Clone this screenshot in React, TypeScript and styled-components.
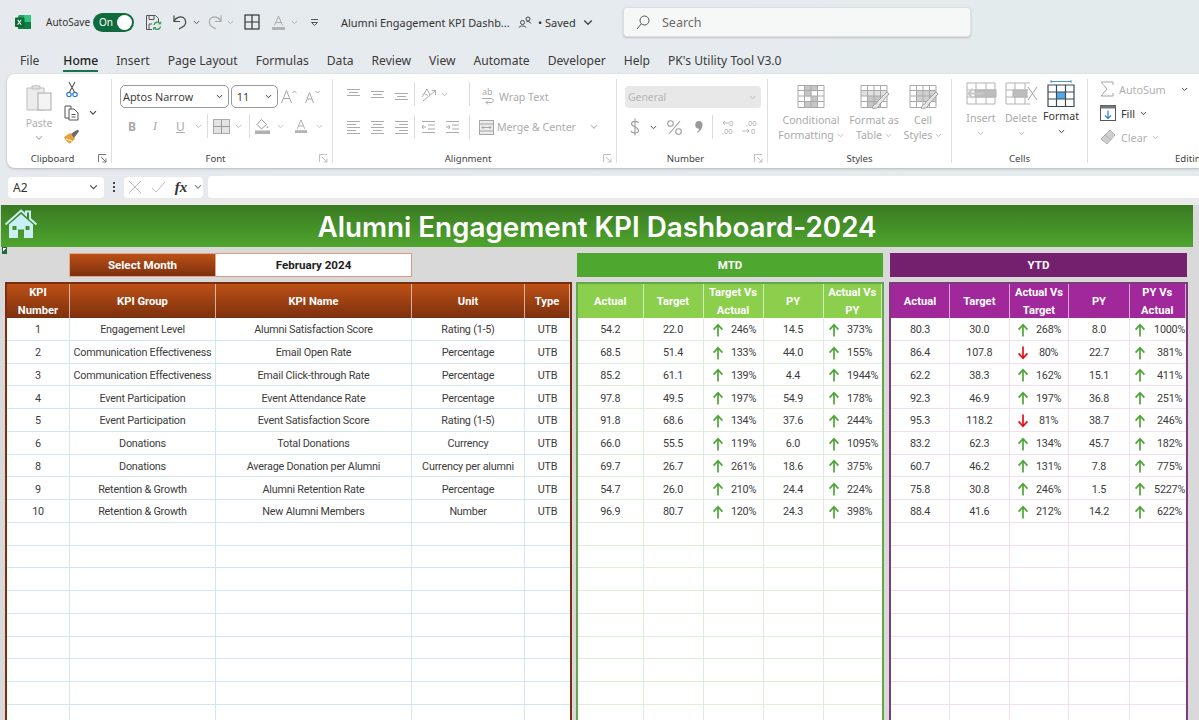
import React from "react";
import styled, { createGlobalStyle } from "styled-components";

const Global = createGlobalStyle`
  html, body { margin: 0; padding: 0; overflow: hidden; }
  body { font-family: "Noto Sans", "Open Sans", sans-serif; }
  svg { display: block; flex: none; }
`;

const Page = styled.div`
  position: relative;
  width: 1199px;
  height: 720px;
  overflow: hidden;
  background: linear-gradient(90deg, #e6eaee 0%, #e5ebee 60%, #e3ebec 100%);
`;

/* ---------- title bar ---------- */
const TitleBar = styled.header`
  height: 44px;
  display: flex;
  align-items: center;
  padding-left: 15px;
  color: #333;
`;
const Tool = styled.span<{ $w: number; $ml?: number }>`
  flex: none;
  width: ${(p) => p.$w}px;
  margin-left: ${(p) => p.$ml ?? 0}px;
  display: flex;
  align-items: center;
  justify-content: center;
`;
const AutoSaveLabel = styled.span`
  margin-left: 15px;
  font-size: 10px;
  width: 47px;
  flex: none;
  white-space: nowrap;
`;
const Toggle = styled.span`
  flex: none;
  width: 41px;
  height: 19px;
  border-radius: 10px;
  background: #0f6b3d;
  color: #fff;
  font-size: 10px;
  display: flex;
  align-items: center;
  justify-content: space-between;
  padding: 0 2px 0 6px;
  box-sizing: border-box;
`;
const Knob = styled.span`
  width: 15px;
  height: 15px;
  border-radius: 50%;
  background: #fff;
`;
const DocTitle = styled.span`
  flex: none;
  width: 168px;
  margin-left: 22px;
  font-size: 10.9px;
  white-space: nowrap;
`;
const Saved = styled.span`
  flex: none;
  margin-left: 6px;
  width: 44px;
  font-size: 11px;
  white-space: nowrap;
`;
const SearchBox = styled.div`
  flex: none;
  margin-left: 30px;
  width: 348px;
  height: 30px;
  box-sizing: border-box;
  background: #f6f7f7;
  border: 1px solid #dde0e1;
  border-radius: 4px;
  box-shadow: 0 1px 2px rgba(0, 0, 0, 0.18);
  display: flex;
  align-items: center;
  gap: 12px;
  padding-left: 12px;
  font-size: 12.5px;
  color: #6b6b6b;
`;

/* ---------- tabs ---------- */
const Tabs = styled.nav`
  height: 30px;
  display: flex;
  gap: 18px;
  padding-left: 20px;
  font-size: 12.1px;
  color: #3a3a3a;
`;
const Tab = styled.span<{ $active?: boolean }>`
  position: relative;
  height: 28px;
  line-height: 33px;
  white-space: nowrap;
  font-weight: ${(p) => (p.$active ? 500 : 400)};
  color: ${(p) => (p.$active ? "#222" : "#3a3a3a")};
  &:first-child {
    margin-right: 6px;
  }
  ${(p) =>
    p.$active
      ? `&::after { content: ""; position: absolute; left: 0; right: 0; bottom: 0; height: 2px; background: #17734a; }`
      : ""}
`;

/* ---------- ribbon ---------- */
const Ribbon = styled.section`
  margin-left: 7px;
  height: 94px;
  background: #fff;
  border-radius: 8px 0 0 8px;
  box-shadow: 0 1px 3px rgba(0, 0, 0, 0.22);
  display: flex;
  overflow: hidden;
`;
const Group = styled.div<{ $w: number; $end?: boolean }>`
  flex: none;
  width: ${(p) => p.$w}px;
  height: 84px;
  margin-top: 5px;
  box-sizing: border-box;
  border-right: ${(p) => (p.$end ? "none" : "1px solid #dedede")};
  display: flex;
  flex-direction: column;
`;
const GroupBody = styled.div<{ $pl?: number }>`
  flex: 1;
  min-height: 0;
  padding-left: ${(p) => p.$pl ?? 0}px;
  display: flex;
`;
const BodyColumn = styled.div<{ $pl?: number }>`
  flex: 1;
  min-height: 0;
  padding-left: ${(p) => p.$pl ?? 0}px;
  display: flex;
  flex-direction: column;
`;
const GroupFoot = styled.div<{ $pl?: number }>`
  height: 14px;
  margin-bottom: -2px;
  padding-left: ${(p) => p.$pl ?? 0}px;
  display: flex;
  align-items: center;
  font-size: 9.6px;
  color: #444;
`;
const GroupName = styled.span`
  flex: 1;
  text-align: center;
`;
const FootLeft = styled.span`
  white-space: nowrap;
`;
const Launcher = styled.span`
  flex: none;
  width: 13px;
  display: flex;
  justify-content: flex-start;
`;
const PasteColumn = styled.div`
  flex: none;
  width: 44px;
  margin-left: 10px;
  padding-top: 4px;
  display: flex;
  flex-direction: column;
  align-items: center;
  font-size: 10.4px;
  color: #aeaeae;
`;
const PasteLabel = styled.span`
  margin-top: 5px;
  line-height: 14px;
`;
const ChevRow = styled.span`
  margin-top: 5px;
`;
const ClipStack = styled.div`
  flex: none;
  margin-top: -1px;
  display: grid;
  grid-template-columns: 21px 22px;
  grid-auto-rows: 23.5px;
  justify-items: center;
  align-items: center;
`;
const RowGrid = styled.div<{ $cols: string; $h: number; $mt?: number }>`
  flex: none;
  height: ${(p) => p.$h}px;
  margin-top: ${(p) => p.$mt ?? 0}px;
  display: grid;
  grid-template-columns: ${(p) => p.$cols};
  align-items: center;
  justify-items: center;
  color: #aaa;
  white-space: nowrap;
`;
const Sep = styled.span`
  width: 1px;
  height: 24px;
  background: #dcdcdc;
`;
const Select = styled.span<{ $w: number }>`
  box-sizing: border-box;
  width: ${(p) => p.$w}px;
  height: 23px;
  display: flex;
  align-items: center;
  justify-content: space-between;
  padding: 0 5px 0 2px;
  border: 1px solid #9a9a9a;
  border-radius: 5px;
  color: #333;
  font-size: 10.9px;
  font-family: "Open Sans", sans-serif;
`;
const GreySelect = styled.span`
  box-sizing: border-box;
  width: 136px;
  height: 22px;
  display: flex;
  align-items: center;
  justify-content: space-between;
  padding: 0 5px 0 3px;
  background: #e8e8e8;
  border-radius: 4px;
  color: #b5b5b5;
  font-size: 10.4px;
`;
const IconLabel = styled.span<{ $down?: number }>`
  justify-self: start;
  display: flex;
  align-items: center;
  gap: 3px;
  font-size: 10.6px;
  color: #ababab;
  padding-top: ${(p) => p.$down ?? 0}px;
`;
const BigButtons = styled.div`
  display: flex;
`;
const BigButton = styled.div<{ $w: number; $pt?: number; $dark?: boolean }>`
  flex: none;
  width: ${(p) => p.$w}px;
  padding-top: ${(p) => p.$pt ?? 6}px;
  display: flex;
  flex-direction: column;
  align-items: center;
  font-size: 10.6px;
  line-height: 15px;
  color: ${(p) => (p.$dark ? "#333" : "#aaa")};
  white-space: nowrap;
`;
const BigText = styled.span<{ $mt?: number }>`
  margin-top: ${(p) => p.$mt ?? 4}px;
  text-align: center;
  display: flex;
  flex-direction: column;
  align-items: center;
`;
const InlineChev = styled.span`
  display: inline-flex;
  align-items: center;
  gap: 3px;
`;
const EditRow = styled.div<{ $dark?: boolean }>`
  height: 24px;
  display: flex;
  align-items: center;
  gap: 5px;
  font-size: 10.8px;
  color: ${(p) => (p.$dark ? "#333" : "#b0b0b0")};
  white-space: nowrap;
`;
const EditStack = styled.div`
  margin-top: -2px;
  padding-left: 12px;
`;
const EditSpacer = styled.span`
  width: 5px;
`;

/* ---------- formula bar ---------- */
const FormulaBar = styled.div`
  height: 22px;
  margin-top: 8px;
  display: flex;
  align-items: center;
  padding-left: 8px;
`;
const NameBox = styled.div`
  flex: none;
  width: 96px;
  height: 21px;
  box-sizing: border-box;
  background: #fff;
  border-radius: 4px;
  display: flex;
  align-items: center;
  justify-content: space-between;
  padding: 0 6px 0 5px;
  font-size: 12px;
  color: #333;
`;
const Dots = styled.span`
  flex: none;
  width: 20px;
  display: flex;
  flex-direction: column;
  align-items: center;
  gap: 2px;
`;
const Dot = styled.i`
  width: 2px;
  height: 2px;
  background: #444;
`;
const FxBox = styled.div`
  flex: none;
  width: 79px;
  height: 21px;
  background: #fff;
  border-radius: 4px;
  display: grid;
  grid-template-columns: 22px 24px 22px 11px;
  justify-items: center;
  align-items: center;
`;
const FxText = styled.span`
  font-family: "Liberation Serif", serif;
  font-style: italic;
  font-weight: 700;
  font-size: 15px;
  color: #333;
`;
const FormulaInput = styled.div`
  flex: 1;
  height: 22px;
  margin-left: 5px;
  background: #fff;
  border-radius: 4px 0 0 4px;
  border-bottom: 1px solid #e2e2e2;
`;

/* ---------- sheet ---------- */
const Sheet = styled.main`
  position: relative;
  height: 522px;
  padding-top: 7px;
  box-sizing: border-box;
  background: linear-gradient(#e9e9e9 0 7px, #d9d9d9 7px);
  font-family: Roboto, "Liberation Sans", sans-serif;
`;
const Banner = styled.div`
  position: relative;
  width: 1192px;
  height: 42px;
  margin-left: 1px;
  background: linear-gradient(#3a7a22, #4fa52e);
  color: #fff;
  font-family: Inter, "Liberation Sans", sans-serif;
  font-weight: 600;
  font-size: 27.8px;
  display: flex;
  align-items: center;
  justify-content: center;
  padding-top: 1px;
  box-sizing: border-box;
`;
const HomeMark = styled.span`
  position: absolute;
  left: 3px;
  top: 4px;
`;
const CellMark = styled.span`
  position: absolute;
  left: 2px;
  top: 49px;
  width: 5px;
  height: 7px;
  background: linear-gradient(135deg, #fff 0 50%, #1f6b3d 50%);
  border: 1px solid #1f6b3d;
  box-sizing: border-box;
`;
const Sections = styled.div`
  display: flex;
  margin-top: 6px;
  padding-left: 5px;
`;
const Section = styled.section<{ $w: number; $ml?: number }>`
  flex: none;
  width: ${(p) => p.$w}px;
  margin-left: ${(p) => p.$ml ?? 0}px;
`;
const MonthBar = styled.div`
  height: 24px;
  margin-left: 64px;
  width: 343px;
  display: flex;
  font-weight: 700;
  font-size: 11.6px;
`;
const MonthLabel = styled.div`
  width: 147px;
  display: flex;
  align-items: center;
  justify-content: center;
  color: #fff;
  background: linear-gradient(#bd5016, #7c300e);
  border: 1px solid #e0a98d;
  box-sizing: border-box;
`;
const MonthValue = styled.div`
  flex: 1;
  display: flex;
  align-items: center;
  justify-content: center;
  background: #fff;
  color: #222;
  border: 1px solid #dc9a78;
  border-left: none;
  box-sizing: border-box;
`;
const BandTitle = styled.div<{ $bg: string; $mx: number; $mr: number }>`
  height: 24px;
  margin: 0 ${(p) => p.$mr}px 0 ${(p) => p.$mx}px;
  display: flex;
  align-items: center;
  justify-content: center;
  color: #fff;
  font-weight: 700;
  font-size: 11.5px;
  background: ${(p) => p.$bg};
`;
const Table = styled.div<{ $cols: string; $edge: string }>`
  margin-top: 5px;
  display: grid;
  grid-template-columns: ${(p) => p.$cols};
  grid-template-rows: 34px;
  grid-auto-rows: 22.75px;
  box-sizing: border-box;
  border: 2px solid ${(p) => p.$edge};
  border-bottom: none;
  background: #fff;
`;
const Head = styled.div<{ $bg: string }>`
  background: ${(p) => p.$bg};
  color: #fff;
  font-weight: 700;
  font-size: 11.2px;
  line-height: 18px;
  padding-top: 1px;
  display: flex;
  align-items: center;
  justify-content: center;
  text-align: center;
  white-space: pre-line;
  box-sizing: border-box;
  border-right: 1px solid rgba(255, 255, 255, 0.6);
  &:last-of-type {
    border-right: none;
  }
`;
const Cell = styled.div<{ $line: string; $last?: boolean }>`
  box-sizing: border-box;
  border-bottom: 1px solid ${(p) => p.$line};
  border-right: ${(p) => (p.$last ? "none" : `1px solid ${p.$line}`)};
  padding-top: 2px;
  display: flex;
  align-items: center;
  justify-content: center;
  font-size: 10.8px;
  letter-spacing: -0.22px;
  color: #3c3c3c;
  white-space: nowrap;
  overflow: hidden;
`;
const DeltaCell = styled(Cell)<{ $pad: number }>`
  justify-content: flex-start;
  padding-left: ${(p) => p.$pad}px;
`;
const DeltaText = styled.span<{ $ml: number; $left?: boolean }>`
  margin-left: ${(p) => p.$ml}px;
  width: 40px;
  flex: none;
  text-align: ${(p) => (p.$left ? "left" : "center")};
`;

/* ---------- drawings ---------- */
const Chev = ({ c = "#9a9a9a", w = 8 }: { c?: string; w?: number }) => (
  <svg width={w} height={w * 0.7} viewBox="0 0 8 5.6" fill="none" stroke={c} strokeWidth="1.1">
    <path d="M1 1.2l3 3 3-3" />
  </svg>
);
const ExcelLogo = () => (
  <svg width="16" height="16" viewBox="0 0 16 16">
    <rect x="3" y="1" width="13" height="14" rx="1.5" fill="#21a366" />
    <rect x="9" y="1" width="7" height="7" fill="#33c481" />
    <rect x="3" y="8" width="13" height="7" fill="#107c41" />
    <rect x="0" y="3.5" width="9.5" height="9.5" rx="1" fill="#0b6a38" />
    <path d="M2.6 5.7l3.6 5M6.2 5.7l-3.6 5" stroke="#fff" strokeWidth="1.1" />
  </svg>
);
const SaveSync = () => (
  <svg width="17" height="17" viewBox="0 0 17 17" fill="none">
    <path d="M1.5 1.5h9l3 3v4M7 15.5H1.5z" stroke="#555" strokeWidth="1" />
    <path d="M1.5 1.5v14M4 1.5v4h5v-4M4 15v-5h3" stroke="#555" strokeWidth="1" />
    <path d="M9 11a3.4 3.4 0 0 1 6-1.6M15.5 12.5a3.4 3.4 0 0 1-6 1.6" stroke="#2f9a56" strokeWidth="1.4" />
    <path d="M15.7 7.5v2.4h-2.4M8.6 16v-2.4H11" stroke="#2f9a56" strokeWidth="1" />
  </svg>
);
const Undo = ({ c, flip }: { c: string; flip?: boolean }) => (
  <svg width="16" height="16" viewBox="0 0 16 16" fill="none" stroke={c} strokeWidth="1.2" style={flip ? { transform: "scaleX(-1)" } : undefined}>
    <path d="M2 1.5v6h6" />
    <path d="M2 7.2C4 3.6 8 1.8 11.2 3.6c3.2 2 3.2 6.2.8 8.4L7 15" />
  </svg>
);
const BorderGrid = () => (
  <svg width="16" height="16" viewBox="0 0 16 16" fill="none" stroke="#333" strokeWidth="1.2">
    <rect x="1" y="1" width="14" height="14" />
    <path d="M8 1v14M1 8h14" />
  </svg>
);
const FontA = ({ c = "#aaa", bar = "#b3b3b3", s = 15 }: { c?: string; bar?: string; s?: number }) => (
  <svg width={s} height={s} viewBox="0 0 15 15" fill="none">
    <path d="M3.5 10.5L7.5 1l4 9.5M5 7.5h5" stroke={c} strokeWidth="1" />
    <rect x="1" y="12" width="13" height="3" fill={bar} />
  </svg>
);
const Customize = () => (
  <svg width="9" height="9" viewBox="0 0 9 9" fill="none" stroke="#555" strokeWidth="1">
    <path d="M1 1.5h7M1.5 4.5l3 3 3-3" />
    <path d="M1.5 4.5h6" />
  </svg>
);
const People = () => (
  <svg width="14" height="12" viewBox="0 0 14 12" fill="none" stroke="#444" strokeWidth="1">
    <circle cx="4.5" cy="6.5" r="2" />
    <path d="M1 11.5c.5-2 6.5-2 7 0" />
    <circle cx="10" cy="3" r="2" />
    <path d="M8.5 5.8c1-.6 3.5-.3 4.5 1.7" />
  </svg>
);
const SearchGlass = () => (
  <svg width="14" height="15" viewBox="0 0 14 15" fill="none" stroke="#555" strokeWidth="1">
    <circle cx="8.5" cy="5.5" r="4.5" />
    <path d="M5.3 8.8L1 14" />
  </svg>
);
const Launch = ({ c = "#666" }: { c?: string }) => (
  <svg width="9" height="9" viewBox="0 0 9 9" fill="none" stroke={c} strokeWidth="0.9">
    <path d="M.5 8V.5H8M3 3l5 5M8 4.5V8H4.5" />
  </svg>
);
const PasteIcon = () => (
  <svg width="28" height="28" viewBox="0 0 28 28" fill="none">
    <path d="M2 5h17v22H2z" fill="#ececec" stroke="#bdbdbd" />
    <path d="M7 5V3h2.5a2 2 0 0 1 3 0H15v3H7z" fill="#e2e2e2" stroke="#bdbdbd" />
    <rect x="13" y="10" width="13" height="17" fill="#f4f4f4" stroke="#a9a9a9" />
  </svg>
);
const CutIcon = () => (
  <svg width="12" height="17" viewBox="0 0 12 17" fill="none">
    <path d="M3 1l5.5 10M9 1L3.5 11" stroke="#555" strokeWidth="1.1" />
    <circle cx="3" cy="13.5" r="2.2" stroke="#2c7cc4" strokeWidth="1.2" />
    <circle cx="9" cy="13.5" r="2.2" stroke="#2c7cc4" strokeWidth="1.2" />
  </svg>
);
const CopyIcon = () => (
  <svg width="15" height="16" viewBox="0 0 15 16" fill="none" stroke="#555" strokeWidth="1">
    <path d="M1 1h6v12H1z" />
    <path d="M5 4h5l4 4v7H5z" fill="#fff" />
    <path d="M7.5 9.5h4M7.5 12h4" />
  </svg>
);
const BrushIcon = () => (
  <svg width="17" height="15" viewBox="0 0 17 15">
    <path d="M1 8l6-4 5 6-5 4.5C5 14 2 11 1 8z" fill="#eda033" />
    <path d="M3 10l6 2" stroke="#fff" strokeWidth="1" />
    <path d="M8 5l4-3 3-1.2 1 1.5L14 5l-3 4z" fill="#6a6a6a" />
  </svg>
);
const GrowA = ({ up }: { up?: boolean }) => (
  <svg width="16" height="15" viewBox="0 0 16 15" fill="none" stroke="#a8a8a8" strokeWidth="1">
    <path d={up ? "M.5 14L5.5 1.5 10.5 14M2.5 9.5h6" : "M1.5 14L5.5 3.5 9.5 14M3 10h5"} />
    <path d={up ? "M11.5 4l2-2 2 2" : "M11.5 2l2 2 2-2"} />
  </svg>
);
const CellBorders = () => (
  <svg width="17" height="15" viewBox="0 0 17 15" fill="#e4e4e4" stroke="#ababab" strokeWidth="1">
    <rect x=".5" y=".5" width="16" height="14" />
    <path d="M8.5 .5v14M.5 7.5h16" stroke="#9a9a9a" />
  </svg>
);
const FillBucket = () => (
  <svg width="15" height="16" viewBox="0 0 15 16" fill="none">
    <path d="M6.5 1.5l5 5-5 4.500-4.500-4.500z" stroke="#999" strokeWidth="1" />
    <path d="M12.5 8l1 2h-2z" fill="#aaa" />
    <rect x="0" y="12.5" width="15" height="3.5" fill="#b0b0b0" />
  </svg>
);
const Lines = ({ kind }: { kind: "top" | "mid" | "bot" | "left" | "center" | "right" }) => {
  const ys = kind === "top" ? [2, 5, 8] : kind === "bot" ? [6, 9, 12] : kind === "mid" ? [4, 7, 10] : [1, 4, 7, 10, 13];
  const span = (i: number) => {
    if (kind === "left") return i % 2 ? [1, 10] : [1, 14];
    if (kind === "right") return i % 2 ? [5, 14] : [1, 14];
    if (kind === "center") return i % 2 ? [3, 12] : [1, 14];
    return i === 1 ? [3, 12] : [1, 14];
  };
  return (
    <svg width="15" height="14" viewBox="0 0 15 14" fill="none" stroke="#ababab" strokeWidth="1">
      {ys.map((y, i) => (
        <path key={y} d={`M${span(i)[0]} ${y}.5H${span(i)[1]}`} />
      ))}
    </svg>
  );
};
const Orient = () => (
  <svg width="17" height="15" viewBox="0 0 17 15" fill="none" stroke="#ababab" strokeWidth="1">
    <path d="M2 10L7 2l3 6M4 6.5l4 2" />
    <path d="M3 14L15 4M11.5 3.5H15.5V8" />
  </svg>
);
const Indent = ({ rev }: { rev?: boolean }) => (
  <svg width="15" height="14" viewBox="0 0 15 14" fill="none" stroke="#ababab" strokeWidth="1">
    <path d="M1 1.5h13M7 5h7M7 9h7M1 12.5h13" />
    <path d={rev ? "M5 7H1M2.5 5L1 7l1.5 2" : "M1 7h4M3.5 5L5 7 3.5 9"} />
  </svg>
);
const WrapStack = styled.span`
  position: relative;
  width: 15px;
  height: 16px;
  flex: none;
`;
const WrapAb = styled.span`
  position: absolute;
  left: 1px;
  top: -3px;
  font-size: 9px;
  line-height: 12px;
`;
const WrapIcon = () => (
  <WrapStack>
    <WrapAb>ab</WrapAb>
    <svg width="15" height="16" viewBox="0 0 15 16" fill="none" stroke="#ababab" strokeWidth="1">
      <path d="M1 9.5h9c3 0 3 4 0 4H5M7 11.5l-2 2 2 2" />
    </svg>
  </WrapStack>
);
const MergeIcon = () => (
  <svg width="15" height="15" viewBox="0 0 15 15" fill="none" stroke="#a5a5a5" strokeWidth="1">
    <rect x=".5" y=".5" width="14" height="14" fill="#ececec" />
    <path d="M.5 4h14M.5 11h14" />
    <path d="M3 7.5h9M4.5 6L3 7.5 4.5 9M10.5 6L12 7.5 10.5 9" />
  </svg>
);
const Dollar = () => (
  <svg width="10" height="18" viewBox="0 0 10 18" fill="none" stroke="#9d9d9d" strokeWidth="1.1">
    <path d="M8.5 5C8 3 2 2.5 1.5 5.5S8.5 9 8.5 12.5 2 15.5 1 13M5 .5v17" />
  </svg>
);
const Percent = () => (
  <svg width="15" height="15" viewBox="0 0 15 15" fill="none" stroke="#9d9d9d" strokeWidth="1.1">
    <circle cx="3.5" cy="3.5" r="2.8" />
    <circle cx="11.5" cy="11.5" r="2.8" />
    <path d="M13 1L2 14" />
  </svg>
);
const Comma = () => (
  <svg width="8" height="12" viewBox="0 0 8 12">
    <path d="M4 0a3.5 3.5 0 0 1 3.5 4c0 3-2 6-5 8l-.5-.8c1.3-1 2-2.3 2.300-3.400A3.500 3.500 0 1 1 4 0z" fill="#9a9a9a" />
  </svg>
);
const Decimal = ({ more }: { more?: boolean }) => (
  <svg width="16" height="16" viewBox="0 0 16 16" fill="#aaa">
    <text x={more ? 4 : 8} y="7" fontSize="7.5" fontFamily="Open Sans">{more ? ".00" : "0"}</text>
    <text x={more ? 9 : 1} y="15" fontSize="7.5" fontFamily="Open Sans">{more ? "0" : ".00"}</text>
    <path d={more ? "M0 12h7M5 10l2 2-2 2" : "M2 4h6M4 2L2 4l2 2"} fill="none" stroke="#aaa" strokeWidth=".8" />
  </svg>
);
type Fill = [number, number, number, number, string?];
const TableIcon = ({ fills, brush, w = 27 }: { fills: Fill[]; brush?: boolean; w?: number }) => (
  <svg width={w + 2} height="24" viewBox="0 0 29 24" fill="none">
    {fills.map((f, i) => (
      <rect key={i} x={f[0]} y={f[1]} width={f[2]} height={f[3]} fill={f[4] ?? "#c6c6c6"} />
    ))}
    <path d="M1 .5h26v22H1zM1 5.5h26M1 11h26M1 16.5h26M7.5 .5v22M14 .5v22M20.5 .5v22" stroke="#a9a9a9" strokeWidth="1" />
    {brush && <path d="M27 7L17 17l-1 2c-2 0-3 2-4 4 3 1 6 0 7-2l1-2L29 9z" fill="#e6e6e6" stroke="#9f9f9f" />}
  </svg>
);
const InsertCells = () => (
  <svg width="31" height="24" viewBox="0 0 31 24" fill="none" stroke="#b3b3b3">
    <path d="M1 1h28v21H1zM1 8h28M1 15h28M10 1v21M20 1v21" />
    <rect x="9" y="8" width="21" height="7" fill="#bdbdbd" />
    <path d="M18 11.5H2M7 7L2 11.5 7 16" stroke="#c9c9c9" strokeWidth="2" />
  </svg>
);
const DeleteCells = () => (
  <svg width="33" height="24" viewBox="0 0 33 24" fill="none" stroke="#b3b3b3">
    <path d="M1 1h24M1 22h24M1 1v21M1 8h22M1 15h22M10 1v21M20 1v6M20 16v6" />
    <rect x="8" y="8" width="14" height="7" fill="#bdbdbd" />
    <path d="M23 5l9 13M32 5l-9 13" stroke="#a3a3a3" />
  </svg>
);
const FormatCells = () => (
  <svg width="28" height="27" viewBox="0 0 28 27" fill="none">
    <path d="M4 1.5h20M4 0v3M24 0v3" stroke="#4b93c9" />
    <rect x="9.5" y="12" width="9.5" height="7" fill="#56a9e8" />
    <path d="M1 5h26v21.5H1zM1 12h26M1 19h26M9.5 5v21.5M18.5 5v21.5" stroke="#3d4a52" strokeWidth="1.2" />
  </svg>
);
const Sigma = () => (
  <svg width="14" height="16" viewBox="0 0 14 16" fill="none" stroke="#a5a5a5">
    <path d="M13 4V1H1l6 7-6 7h12v-3" />
  </svg>
);
const FillDown = () => (
  <svg width="16" height="16" viewBox="0 0 16 16" fill="none">
    <rect x=".5" y=".5" width="15" height="15" stroke="#555" />
    <rect x=".5" y=".5" width="15" height="3" fill="#777" />
    <path d="M8 5.5v8M5 10.5l3 3 3-3" stroke="#2b7cd3" strokeWidth="1.2" />
  </svg>
);
const Eraser = () => (
  <svg width="16" height="16" viewBox="0 0 16 16" fill="#cfcfcf" stroke="#b0b0b0">
    <path d="M10 1l5 5-8 9-6-5z" />
    <path d="M5 6l6 5" />
  </svg>
);
const HomeIcon = () => (
  <svg width="34" height="30" viewBox="0 0 34 30">
    <path d="M1.5 15.5L17 1.5l5 4.5V2.5h4v7.2l6.5 5.8" fill="none" stroke="#c9f0f6" strokeWidth="2" />
    <path fillRule="evenodd" d="M5 15.5L17 5l12 10.5V29H20v-8.5h-6V29H5zM8.5 17v4h4v-4zM21.5 17v4h4v-4z" fill="#c9f0f6" />
  </svg>
);
const Arrow = ({ down }: { down?: boolean }) => (
  <svg width="12" height="14" viewBox="0 0 12 14" fill="none" stroke={down ? "#e3101c" : "#4ea638"} strokeWidth="1.7" style={down ? { transform: "scaleY(-1)" } : undefined}>
    <path d="M6 13.5V2M1.6 6.6L6 1.8l4.4 4.8" />
  </svg>
);

/* ---------- data ---------- */
const kpis = [
  ["1", "Engagement Level", "Alumni Satisfaction Score", "Rating (1-5)"],
  ["2", "Communication Effectiveness", "Email Open Rate", "Percentage"],
  ["3", "Communication Effectiveness", "Email Click-through Rate", "Percentage"],
  ["4", "Event Participation", "Event Attendance Rate", "Percentage"],
  ["5", "Event Participation", "Event Satisfaction Score", "Rating (1-5)"],
  ["6", "Donations", "Total Donations", "Currency"],
  ["8", "Donations", "Average Donation per Alumni", "Currency per alumni"],
  ["9", "Retention & Growth", "Alumni Retention Rate", "Percentage"],
  ["10", "Retention & Growth", "New Alumni Members", "Number"],
];
const mtd = [
  ["54.2", "22.0", "246%", "14.5", "373%"],
  ["68.5", "51.4", "133%", "44.0", "155%"],
  ["85.2", "61.1", "139%", "4.4", "1944%"],
  ["97.8", "49.5", "197%", "54.9", "178%"],
  ["91.8", "68.6", "134%", "37.6", "244%"],
  ["66.0", "55.5", "119%", "6.0", "1095%"],
  ["69.7", "26.7", "261%", "18.6", "375%"],
  ["54.7", "26.0", "210%", "24.4", "224%"],
  ["96.9", "80.7", "120%", "24.3", "398%"],
];
const ytd = [
  ["80.3", "30.0", "268%", "8.0", "1000%"],
  ["86.4", "107.8", "80%", "22.7", "381%"],
  ["62.2", "38.3", "162%", "15.1", "411%"],
  ["92.3", "46.9", "197%", "36.8", "251%"],
  ["95.3", "118.2", "81%", "38.7", "246%"],
  ["83.2", "62.3", "134%", "45.7", "182%"],
  ["60.7", "46.2", "131%", "7.8", "775%"],
  ["75.8", "30.8", "246%", "1.5", "5227%"],
  ["88.4", "41.6", "212%", "14.2", "622%"],
];
const ROWS = 18;
const blanks = (n: number) => Array.from({ length: n }, (_, i) => i);
const tabNames = ["File", "Home", "Insert", "Page Layout", "Formulas", "Data", "Review", "View", "Automate", "Developer", "Help", "PK's Utility Tool V3.0"];

const ORANGE = "linear-gradient(#bd5016, #7c300e)";
const GREEN = "#8bcf4c";
const PURPLE = "#a1289a";

const KpiTable = () => {
  const line = "#d3e7ef";
  return (
    <Table $cols="63px 146px 196px 113px 45px" $edge="#7a2e12">
      {["KPI\nNumber", "KPI Group", "KPI Name", "Unit", "Type"].map((h) => (
        <Head key={h} $bg={ORANGE}>{h}</Head>
      ))}
      {blanks(ROWS).map((r) => {
        const row = kpis[r];
        return [0, 1, 2, 3, 4].map((c) => (
          <Cell key={`${r}-${c}`} $line={line} $last={c === 4}>
            {row ? (c === 4 ? "UTB" : row[c]) : ""}
          </Cell>
        ));
      })}
    </Table>
  );
};

type MetricProps = {
  cols: string;
  edge: string;
  headBg: string;
  line: string;
  heads: string[];
  data: string[][];
  lastPad: number;
  lastGap: number;
  lastLeft?: boolean;
  midPad: number;
  midGap: number;
};
const MetricTable = ({ cols, edge, headBg, line, heads, data, lastPad, lastGap, lastLeft, midPad, midGap }: MetricProps) => (
  <Table $cols={cols} $edge={edge}>
    {heads.map((h) => (
      <Head key={h} $bg={headBg}>{h}</Head>
    ))}
    {blanks(ROWS).map((r) => {
      const row = data[r];
      return [0, 1, 2, 3, 4].map((c) => {
        const key = `${r}-${c}`;
        const last = c === 4;
        if (row && (c === 2 || last)) {
          const down = parseInt(row[c], 10) < 100;
          return (
            <DeltaCell key={key} $line={line} $last={last} $pad={last ? lastPad : midPad}>
              <Arrow down={down} />
              <DeltaText $ml={last ? lastGap : midGap} $left={last && lastLeft}>{row[c]}</DeltaText>
            </DeltaCell>
          );
        }
        return (
          <Cell key={key} $line={line} $last={last}>
            {row ? row[c] : ""}
          </Cell>
        );
      });
    })}
  </Table>
);

export default function App() {
  return (
    <Page>
      <Global />
      <TitleBar>
        <ExcelLogo />
        <AutoSaveLabel>AutoSave</AutoSaveLabel>
        <Toggle>On<Knob /></Toggle>
        <Tool $w={17} $ml={11}><SaveSync /></Tool>
        <Tool $w={16} $ml={10}><Undo c="#444" /></Tool>
        <Tool $w={8} $ml={4}><Chev c="#555" w={7} /></Tool>
        <Tool $w={16} $ml={7}><Undo c="#a8a8a8" flip /></Tool>
        <Tool $w={8} $ml={3}><Chev c="#aaa" w={7} /></Tool>
        <Tool $w={16} $ml={10}><BorderGrid /></Tool>
        <Tool $w={15} $ml={11}><FontA /></Tool>
        <Tool $w={8} $ml={4}><Chev c="#aaa" w={7} /></Tool>
        <Tool $w={9} $ml={12}><Customize /></Tool>
        <DocTitle>Alumni Engagement KPI Dashb...</DocTitle>
        <Tool $w={14} $ml={9}><People /></Tool>
        <Saved>• Saved</Saved>
        <Tool $w={10} $ml={1}><Chev c="#444" w={10} /></Tool>
        <SearchBox><SearchGlass />Search</SearchBox>
      </TitleBar>
      <Tabs>
        {tabNames.map((t) => (
          <Tab key={t} $active={t === "Home"}>{t}</Tab>
        ))}
      </Tabs>
      <Ribbon>
        <Group $w={105}>
          <GroupBody>
            <PasteColumn>
              <PasteIcon />
              <PasteLabel>Paste</PasteLabel>
              <ChevRow><Chev c="#b5b5b5" /></ChevRow>
            </PasteColumn>
            <ClipStack>
              <CutIcon /><span />
              <CopyIcon /><Chev c="#444" />
              <BrushIcon /><span />
            </ClipStack>
          </GroupBody>
          <GroupFoot><GroupName>Clipboard</GroupName><Launcher><Launch /></Launcher></GroupFoot>
        </Group>
        <Group $w={221}>
          <BodyColumn $pl={8}>
            <RowGrid $cols="109px 2px 47px 22px 24px" $h={23} $mt={6}>
              <Select $w={109}>Aptos Narrow<Chev c="#333" w={7} /></Select>
              <span />
              <Select $w={47}>&nbsp;11<Chev c="#333" w={7} /></Select>
              <GrowA up />
              <GrowA />
            </RowGrid>
            <RowGrid $cols="24px 22px 29px 6px 12px 17px 16px 6px 20px 16px 26px 10px" $h={24} $mt={6}>
              <b style={{ fontSize: 12 }}>B</b>
              <i style={{ fontSize: 12, fontFamily: "Liberation Serif, serif" }}>I</i>
              <u style={{ fontSize: 12 }}>U</u>
              <Chev c="#bbb" w={7} />
              <Sep />
              <CellBorders />
              <Chev c="#bbb" w={7} />
              <Sep />
              <FillBucket />
              <Chev c="#bbb" w={7} />
              <FontA s={14} />
              <Chev c="#bbb" w={7} />
            </RowGrid>
          </BodyColumn>
          <GroupFoot><GroupName>Font</GroupName><Launcher><Launch c="#bbb" /></Launcher></GroupFoot>
        </Group>
        <Group $w={284}>
          <BodyColumn $pl={8.5}>
            <RowGrid $cols="24px 24px 24px 2px 25px 8px 20px 1px 11.5px 1fr" $h={30}>
              <Lines kind="top" />
              <Lines kind="mid" />
              <Lines kind="bot" />
              <Sep />
              <Orient />
              <Chev c="#bbb" w={7} />
              <span />
              <Sep />
              <span />
              <IconLabel $down={5}><WrapIcon />Wrap Text</IconLabel>
            </RowGrid>
            <RowGrid $cols="24px 24px 24px 2px 26px 22px 5px 1px 9.5px 100px 30px" $h={36}>
              <Lines kind="left" />
              <Lines kind="center" />
              <Lines kind="right" />
              <Sep />
              <Indent rev />
              <Indent />
              <span />
              <Sep />
              <span />
              <IconLabel><MergeIcon />Merge &amp; Center</IconLabel>
              <Chev c="#bbb" />
            </RowGrid>
          </BodyColumn>
          <GroupFoot><GroupName>Alignment</GroupName><Launcher><Launch c="#bbb" /></Launcher></GroupFoot>
        </Group>
        <Group $w={151}>
          <BodyColumn $pl={8}>
            <RowGrid $cols="136px" $h={22} $mt={7}>
              <GreySelect>General<Chev c="#bbb" w={7} /></GreySelect>
            </RowGrid>
            <RowGrid $cols="20px 16px 26px 24px 2px 31px 11px" $h={36} $mt={1}>
              <Dollar />
              <Chev c="#444" w={7} />
              <Percent />
              <Comma />
              <Sep />
              <Decimal />
              <Decimal more />
            </RowGrid>
          </BodyColumn>
          <GroupFoot><GroupName>Number</GroupName><Launcher><Launch c="#bbb" /></Launcher></GroupFoot>
        </Group>
        <Group $w={184}>
          <GroupBody $pl={11}>
            <BigButtons>
              <BigButton $w={64}>
                <TableIcon fills={[[7.5, 0.5, 13, 5.5], [7.5, 6, 7, 5.5], [14, 11, 7, 5.5], [7.5, 16.5, 13, 6]]} />
                <BigText>Conditional<InlineChev>Formatting <Chev c="#bbb" w={7} /></InlineChev></BigText>
              </BigButton>
              <BigButton $w={62}>
                <TableIcon brush fills={[[1, 5.5, 26, 5.5, "#e0e0e0"], [7.5, 11, 13, 11.5]]} />
                <BigText>Format as<InlineChev>Table <Chev c="#bbb" w={7} /></InlineChev></BigText>
              </BigButton>
              <BigButton $w={36}>
                <TableIcon brush fills={[[7.5, 5.5, 19.5, 11, "#d0d0d0"]]} />
                <BigText>Cell<InlineChev>Styles <Chev c="#bbb" w={7} /></InlineChev></BigText>
              </BigButton>
            </BigButtons>
          </GroupBody>
          <GroupFoot><GroupName>Styles</GroupName></GroupFoot>
        </Group>
        <Group $w={136}>
          <GroupBody $pl={9}>
            <BigButtons>
              <BigButton $w={40} $pt={3}>
                <InsertCells />
                <BigText $mt={5}>Insert<ChevRow><Chev c="#bbb" w={7} /></ChevRow></BigText>
              </BigButton>
              <BigButton $w={40} $pt={3}>
                <DeleteCells />
                <BigText $mt={5}>Delete<ChevRow><Chev c="#bbb" w={7} /></ChevRow></BigText>
              </BigButton>
              <BigButton $w={40} $pt={1} $dark>
                <FormatCells />
                <BigText $mt={2}>Format<ChevRow><Chev c="#333" w={7} /></ChevRow></BigText>
              </BigButton>
            </BigButtons>
          </GroupBody>
          <GroupFoot><GroupName>Cells</GroupName></GroupFoot>
        </Group>
        <Group $w={120} $end>
          <GroupBody>
            <EditStack>
              <EditRow><Sigma />AutoSum<EditSpacer /><Chev c="#444" w={7} /></EditRow>
              <EditRow $dark><FillDown />Fill <Chev c="#444" w={7} /></EditRow>
              <EditRow><Eraser />Clear <Chev c="#bbb" w={7} /></EditRow>
            </EditStack>
          </GroupBody>
          <GroupFoot $pl={87}><FootLeft>Editing</FootLeft></GroupFoot>
        </Group>
      </Ribbon>
      <FormulaBar>
        <NameBox>A2<Chev c="#555" w={9} /></NameBox>
        <Dots><Dot /><Dot /><Dot /></Dots>
        <FxBox>
          <svg width="14" height="14" viewBox="0 0 14 14" stroke="#bcbcbc" fill="none"><path d="M1 1l12 12M13 1L1 13" /></svg>
          <svg width="15" height="12" viewBox="0 0 15 12" stroke="#bcbcbc" fill="none"><path d="M1 7l4 4L14 1" /></svg>
          <FxText>fx</FxText>
          <Chev c="#888" w={8} />
        </FxBox>
        <FormulaInput />
      </FormulaBar>
      <Sheet>
        <Banner>
          <HomeMark><HomeIcon /></HomeMark>
          Alumni Engagement KPI Dashboard-2024
        </Banner>
        <CellMark />
        <Sections>
          <Section $w={567}>
            <MonthBar>
              <MonthLabel>Select Month</MonthLabel>
              <MonthValue>February 2024</MonthValue>
            </MonthBar>
            <KpiTable />
          </Section>
          <Section $w={308} $ml={4}>
            <BandTitle $bg="#4ea72e" $mx={1} $mr={1}>MTD</BandTitle>
            <MetricTable
              cols="65.5px 60px 60px 60px 58.5px"
              edge="#62a84c"
              headBg={GREEN}
              line="#dfeeda"
              heads={["Actual", "Target", "Target Vs\nActual", "PY", "Actual Vs\nPY"]}
              data={mtd}
              midPad={8}
              midGap={0}
              lastPad={4.5}
              lastGap={7}
              lastLeft
            />
          </Section>
          <Section $w={299} $ml={5}>
            <BandTitle $bg="#75206f" $mx={1} $mr={1}>YTD</BandTitle>
            <MetricTable
              cols="59px 59.6px 59.8px 60.2px 56.4px"
              edge="#7f3a7c"
              headBg={PURPLE}
              line="#f1deef"
              heads={["Actual", "Target", "Actual Vs\nTarget", "PY", "PY Vs\nActual"]}
              data={ytd}
              midPad={7}
              midGap={0}
              lastPad={4}
              lastGap={4}
            />
          </Section>
        </Sections>
      </Sheet>
    </Page>
  );
}
